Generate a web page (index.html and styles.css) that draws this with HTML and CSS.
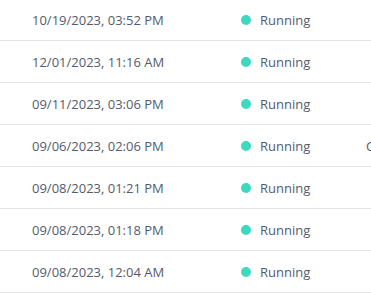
FILE: index.html
```html
<!DOCTYPE html>
<html>
<head>
<meta charset="utf-8">
<link rel="stylesheet" href="styles.css">
</head>
<body>
<div class="table">
  <div class="row"><div class="date">10/19/2023, 03:52 PM</div><div class="status"><span class="dot"></span>Running</div><div class="extra"></div></div>
  <div class="row"><div class="date">12/01/2023, 11:16 AM</div><div class="status"><span class="dot"></span>Running</div><div class="extra"></div></div>
  <div class="row"><div class="date">09/11/2023, 03:06 PM</div><div class="status"><span class="dot"></span>Running</div><div class="extra"></div></div>
  <div class="row"><div class="date">09/06/2023, 02:06 PM</div><div class="status"><span class="dot"></span>Running</div><div class="extra">Cron</div></div>
  <div class="row"><div class="date">09/08/2023, 01:21 PM</div><div class="status"><span class="dot"></span>Running</div><div class="extra"></div></div>
  <div class="row"><div class="date">09/08/2023, 01:18 PM</div><div class="status"><span class="dot"></span>Running</div><div class="extra"></div></div>
  <div class="row"><div class="date">09/08/2023, 12:04 AM</div><div class="status"><span class="dot"></span>Running</div><div class="extra"></div></div>
</div>
</body>
</html>
```

FILE: styles.css
```css
html, body {
  margin: 0;
  padding: 0;
  background: #ffffff;
  overflow: hidden;
}
body {
  font-family: "Open Sans", "Noto Sans", sans-serif;
  font-size: 13px;
  color: #545b6c;
}
.table {
  margin-top: -1px;
  width: 500px;
}
.row {
  display: grid;
  grid-template-columns: 241px 125px 1fr;
  align-items: center;
  height: 41px;
  border-bottom: 1px solid #e4e4e6;
}
.date {
  padding-left: 32px;
  white-space: nowrap;
}
.status {
  display: flex;
  align-items: center;
  white-space: nowrap;
}
.dot {
  width: 10px;
  height: 10px;
  border-radius: 50%;
  background: #3dd8c0;
  margin-right: 9px;
}
.extra {
  white-space: nowrap;
}
```
